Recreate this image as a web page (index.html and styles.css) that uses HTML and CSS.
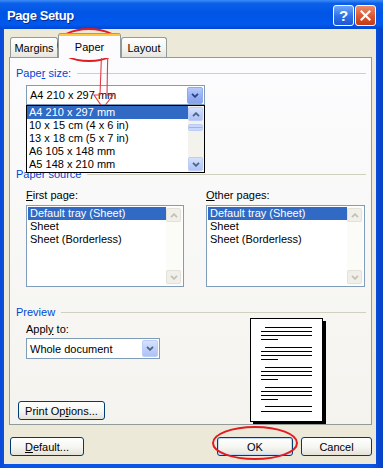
FILE: index.html
```html
<!DOCTYPE html>
<html lang="en">
<head>
<meta charset="UTF-8">
<title>Page Setup</title>
<link rel="stylesheet" href="styles.css">
</head>
<body>
<div class="window">
    <div class="titlebar">
        <span class="title">Page Setup</span>
        <div class="caption-buttons">
            <span class="cap-btn help">?</span>
            <span class="cap-btn close">
                <svg width="11" height="11" viewBox="0 0 11 11"><path d="M1.5 1.5 L9.5 9.5 M9.5 1.5 L1.5 9.5" stroke="#fff" stroke-width="2.2" stroke-linecap="square"/></svg>
            </span>
        </div>
    </div>
    <div class="frame">
        <div class="content">
            <div class="tabs">
                <div class="tab tab-margins">Margins</div>
                <div class="tab tab-paper active">Paper</div>
                <div class="tab tab-layout">Layout</div>
            </div>
            <div class="panel">
                <div class="legend"><span>Pape<u>r</u> size:</span></div>
                <div class="combo combo-size">
                    <span class="combo-text">A4 210 x 297 mm</span>
                    <span class="combo-btn hot"><svg width="8" height="5" viewBox="0 0 8 5"><polyline points="1,0.8 4,3.8 7,0.8" fill="none" stroke="#2B3F85" stroke-width="1.8"/></svg></span>
                    <div class="dropdown">
                        <div class="rows">
                            <div class="row selected">A4 210 x 297 mm</div>
                            <div class="row">10 x 15 cm (4 x 6 in)</div>
                            <div class="row">13 x 18 cm (5 x 7 in)</div>
                            <div class="row">A6 105 x 148 mm</div>
                            <div class="row">A5 148 x 210 mm</div>
                        </div>
                        <div class="scrollbar">
                            <span class="sb-btn"><svg width="8" height="5" viewBox="0 0 8 5"><polyline points="1,4.2 4,1.2 7,4.2" fill="none" stroke="#4D6185" stroke-width="1.8"/></svg></span>
                            <span class="sb-thumb"></span>
                            <span class="sb-btn down"><svg width="8" height="5" viewBox="0 0 8 5"><polyline points="1,0.8 4,3.8 7,0.8" fill="none" stroke="#4D6185" stroke-width="1.8"/></svg></span>
                        </div>
                    </div>
                </div>

                <div class="legend legend-source"><span>Paper source</span></div>
                <div class="source-row">
                    <div class="source-col">
                        <div class="field-label"><u>F</u>irst page:</div>
                        <div class="listbox">
                            <div class="rows">
                                <div class="row selected">Default tray (Sheet)</div>
                                <div class="row">Sheet</div>
                                <div class="row">Sheet (Borderless)</div>
                            </div>
                            <div class="scrollbar disabled">
                                <span class="sb-btn"><svg width="8" height="5" viewBox="0 0 8 5"><polyline points="1,4.2 4,1.2 7,4.2" fill="none" stroke="#C3C1B5" stroke-width="1.8"/></svg></span>
                                <span class="sb-btn down"><svg width="8" height="5" viewBox="0 0 8 5"><polyline points="1,0.8 4,3.8 7,0.8" fill="none" stroke="#C3C1B5" stroke-width="1.8"/></svg></span>
                            </div>
                        </div>
                    </div>
                    <div class="source-col">
                        <div class="field-label"><u>O</u>ther pages:</div>
                        <div class="listbox">
                            <div class="rows">
                                <div class="row selected">Default tray (Sheet)</div>
                                <div class="row">Sheet</div>
                                <div class="row">Sheet (Borderless)</div>
                            </div>
                            <div class="scrollbar disabled">
                                <span class="sb-btn"><svg width="8" height="5" viewBox="0 0 8 5"><polyline points="1,4.2 4,1.2 7,4.2" fill="none" stroke="#C3C1B5" stroke-width="1.8"/></svg></span>
                                <span class="sb-btn down"><svg width="8" height="5" viewBox="0 0 8 5"><polyline points="1,0.8 4,3.8 7,0.8" fill="none" stroke="#C3C1B5" stroke-width="1.8"/></svg></span>
                            </div>
                        </div>
                    </div>
                </div>

                <div class="legend legend-preview"><span>Preview</span></div>
                <div class="preview-row">
                    <div class="preview-left">
                        <div class="field-label apply-label">Appl<u>y</u> to:</div>
                        <div class="combo combo-apply">
                            <span class="combo-text">Whole document</span>
                            <span class="combo-btn"><svg width="8" height="5" viewBox="0 0 8 5"><polyline points="1,0.8 4,3.8 7,0.8" fill="none" stroke="#4D6185" stroke-width="1.8"/></svg></span>
                        </div>
                        <div class="button print-options"><span>Print Op<u>t</u>ions...</span></div>
                    </div>
                    <svg class="page" width="76" height="106" viewBox="0 0 76 106">
                        <rect x="73" y="3" width="3" height="103" fill="#000"/>
                        <rect x="3" y="104" width="73" height="2" fill="#000"/>
                        <rect x="0.5" y="0.5" width="72" height="103" fill="#fff" stroke="#000"/>
                        <g stroke="#000" stroke-width="1">
                            <path d="M15 9.5H62 M11 13.5H62 M11 17.5H62 M11 21.5H28"/>
                            <path d="M15 29.5H62 M11 33.5H62 M11 37.5H62 M11 41.5H28"/>
                            <path d="M15 49.5H62 M11 53.5H62 M11 57.5H62 M11 61.5H28"/>
                            <path d="M15 69.5H62 M11 73.5H62 M11 77.5H62 M11 81.5H28"/>
                            <path d="M15 88.5H62 M11 93.5H62"/>
                        </g>
                    </svg>
                </div>
            </div>
            <div class="actions">
                <div class="button btn-default"><span><u>D</u>efault...</span></div>
                <div class="button btn-ok">OK</div>
                <div class="button btn-cancel">Cancel</div>
            </div>
        </div>
    </div>

    <!-- red annotation marks drawn over the dialog -->
    <svg class="marks" width="383" height="468" viewBox="0 0 383 468">
        <ellipse cx="89" cy="45" rx="31" ry="16" fill="none" stroke="#E11B22" stroke-width="2"/>
        <polygon points="102,42 108,39 107,95 113,95 103,108 94,95 100,95" fill="none" stroke="#E43A42" stroke-width="1.1"/>
        <ellipse cx="255" cy="443" rx="42" ry="16" fill="none" stroke="#E11B22" stroke-width="2"/>
    </svg>
</div>
</body>
</html>
```

FILE: styles.css
```css
* {
    box-sizing: border-box;
}
body {
    margin: 0;
    font-family: "Liberation Sans", Arial, sans-serif;
    font-size: 11px;
    color: #000;
    background: #0548D8;
}
.window {
    position: relative;
    width: 383px;
    height: 468px;
    display: flex;
    flex-direction: column;
}
.titlebar {
    height: 29px;
    padding: 2px 7px 0 7px;
    display: flex;
    align-items: center;
    background: linear-gradient(#3D8CF6 0%, #0A5FEA 12%, #0055E5 45%, #0058EE 85%, #0047D0 100%);
}
.title {
    color: #fff;
    font-weight: bold;
    font-size: 13px;
    letter-spacing: -0.4px;
    text-shadow: 1px 1px #0A2A88;
}
.caption-buttons {
    margin-left: auto;
    display: flex;
    gap: 1px;
}
.cap-btn {
    width: 21px;
    height: 21px;
    border: 1px solid #fff;
    border-radius: 3px;
    display: flex;
    align-items: center;
    justify-content: center;
    color: #fff;
}
.help {
    background: linear-gradient(#6FA6FA, #2F6FE6 55%, #1D58D6);
    font-weight: bold;
    font-size: 15px;
}
.close {
    background: linear-gradient(#EC8D6C, #DA5530 55%, #C13D16);
}
.frame {
    flex: 1;
    padding: 0 7px 4px 4px;
    background: linear-gradient(90deg, #0A4AD6, #0A55E8 2%, #0A55E8 97%, #0640C4);
}
.content {
    height: 100%;
    background: #ECE9D8;
    padding: 4px 4px 0 5px;
    display: flex;
    flex-direction: column;
}

/* tabs */
.tabs {
    height: 24px;
    display: flex;
    align-items: flex-end;
    padding-left: 1px;
}
.tab {
    height: 20px;
    border: 1px solid #919B9C;
    border-bottom: none;
    border-radius: 3px 3px 0 0;
    background: linear-gradient(#FFFFFF, #F3F3EF 60%, #E6E5DE);
    display: flex;
    align-items: center;
    justify-content: center;
}
.tab-margins {
    width: 48px;
}
.tab-paper {
    width: 63px;
}
.tab-layout {
    width: 46px;
}
.tab.active {
    height: 25px;
    margin-bottom: -1px;
    padding-top: 2px;
    border-top: none;
    position: relative;
    z-index: 1;
    background: linear-gradient(#E68B2C 0, #E68B2C 1px, #FFC83C 1px, #FFC83C 3px, #FCFCFE 3px);
}

/* tab page */
.panel {
    height: 368px;
    border: 1px solid #919B9C;
    background: linear-gradient(#FCFCFE, #F4F3EE);
    padding: 9px 5px 0 6px;
    display: flex;
    flex-direction: column;
}
.legend {
    height: 13px;
    line-height: 13px;
    color: #0046D5;
    display: flex;
    align-items: center;
}
.legend::after {
    content: "";
    flex: 1;
    height: 1px;
    margin-left: 6px;
    background: #D0D0BF;
}
.legend-source {
    margin-top: 63px;
}
.legend-preview {
    margin-top: 19px;
}
.field-label {
    height: 13px;
    line-height: 13px;
}

/* combo boxes */
.combo {
    position: relative;
    margin: 5px 0 0 10px;
    width: 179px;
    height: 20px;
    border: 1px solid #7F9DB9;
    background: #fff;
    display: flex;
    align-items: center;
    padding-left: 3px;
}
.combo-text {
    flex: 1;
}
.combo-btn {
    width: 16px;
    height: 17px;
    margin-right: 1px;
    border-radius: 2px;
    background: linear-gradient(#D6E2FD, #BCCDF9 60%, #AFC2F5);
    border: 1px solid #BCCDF8;
    display: flex;
    align-items: center;
    justify-content: center;
}
.combo-btn.hot {
    background: linear-gradient(#B6CBFB, #94AEF2 60%, #87A2EC);
    border-color: #90AAF0;
}
.combo-apply {
    width: 134px;
    height: 21px;
    margin-top: 2px;
}
.combo-apply .combo-btn {
    height: 17px;
}

/* open dropdown list */
.dropdown {
    position: absolute;
    top: 19px;
    left: -1px;
    width: 179px;
    height: 68px;
    border: 1px solid #000;
    background: #fff;
    display: flex;
    z-index: 5;
}
.rows {
    flex: 1;
}
.row {
    height: 13px;
    line-height: 13px;
    padding-left: 2px;
    white-space: nowrap;
}
.row.selected {
    background: #316AC5;
    color: #fff;
}
.scrollbar {
    width: 16px;
    padding: 1px 1px 1px 0;
    background: #F3F2EC;
    display: flex;
    flex-direction: column;
}
.sb-btn {
    height: 14px;
    border-radius: 2px;
    background: linear-gradient(#D6E2FD, #BCCDF9 60%, #AFC2F5);
    border: 1px solid #BCCDF8;
    display: flex;
    align-items: center;
    justify-content: center;
}
.sb-btn.down {
    margin-top: auto;
}
.sb-thumb {
    height: 7px;
    margin-top: 3px;
    border-radius: 2px;
    border: 1px solid #BCCDF8;
    background: repeating-linear-gradient(#C9D7FB 0, #C9D7FB 2px, #9FB3E6 2px, #9FB3E6 3px);
}
.scrollbar.disabled {
    background: #FBFBF8;
}
.scrollbar.disabled .sb-btn {
    background: #F0EFE9;
    border-color: #E4E2D8;
}

/* paper source lists */
.source-row {
    margin-top: 8px;
    padding-left: 10px;
    display: flex;
    gap: 22px;
}
.source-col {
    width: 158px;
}
.source-col + .source-col {
    width: 159px;
}
.listbox {
    margin-top: 3px;
    height: 82px;
    border: 1px solid #7F9DB9;
    background: #fff;
    padding: 1px;
    display: flex;
}

/* preview */
.preview-row {
    flex: 1;
    display: flex;
}
.preview-left {
    flex: 1;
    display: flex;
    flex-direction: column;
}
.apply-label {
    margin: 4px 0 0 10px;
}
.page {
    margin: -1px 40px 0 0;
}

/* buttons */
.button {
    height: 19px;
    border: 1px solid #003C74;
    border-radius: 3px;
    background: linear-gradient(#FFFFFF, #F5F5F1 55%, #E4E2D9);
    display: flex;
    align-items: center;
    justify-content: center;
}
.print-options {
    width: 87px;
    margin: auto 0 4px 2px;
}
.actions {
    margin-top: 12px;
    padding-left: 1px;
    display: flex;
    gap: 8px;
}
.btn-default {
    width: 74px;
}
.btn-ok {
    width: 76px;
    margin-left: auto;
    box-shadow: inset 0 0 0 1px #C6D8F7;
}
.btn-cancel {
    width: 71px;
}

.marks {
    position: absolute;
    top: 0;
    left: 0;
    pointer-events: none;
}
```
